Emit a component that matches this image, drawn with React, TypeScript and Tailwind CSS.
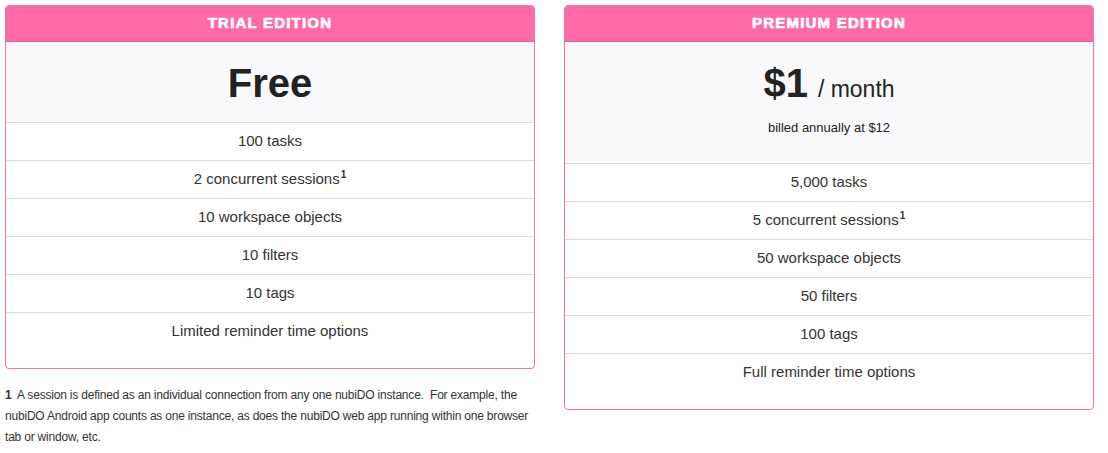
import React from "react";

const font = { fontFamily: '"Liberation Sans", Arial, sans-serif' };

function Sup() {
  return <sup className="text-[10px] font-bold relative -top-[6px] ml-px">1</sup>;
}

function Row({ children }: { children: React.ReactNode }) {
  return (
    <div className="h-[38px] border-t border-[#dddddd] flex items-center justify-center text-[15px] text-[#333333]">
      <span>{children}</span>
    </div>
  );
}

function Card({
  title,
  price,
  priceHeight,
  rows,
}: {
  title: string;
  price: React.ReactNode;
  priceHeight: string;
  rows: React.ReactNode[];
}) {
  return (
    <div className="w-[530px] border border-[#e27aa5] rounded-[4px] overflow-hidden bg-white pb-[18px]">
      <div className="h-[36px] bg-[#ff6aa6] border-b border-[#e0609a] flex items-center justify-center">
        <span className="text-white text-[15px] font-bold tracking-[1.2px] uppercase [-webkit-text-stroke:0.7px_white]">
          {title}
        </span>
      </div>
      <div className={`${priceHeight} bg-[#f9f9fb]`}>{price}</div>
      {rows.map((r, i) => (
        <Row key={i}>{r}</Row>
      ))}
    </div>
  );
}

export default function App() {
  return (
    <div className="bg-white w-[1108px] h-[453px] pt-[5px] pl-[5px]" style={font}>
      <div className="flex gap-[29px] items-start">
        <div className="w-[530px]">
          <Card
            title="Trial Edition"
            priceHeight="h-[80px]"
            price={
              <div className="h-full flex items-center justify-center pt-[1px]">
                <span className="text-[40px] font-bold text-[#222222] leading-none">Free</span>
              </div>
            }
            rows={[
              "100 tasks",
              <>2 concurrent sessions<Sup /></>,
              "10 workspace objects",
              "10 filters",
              "10 tags",
              "Limited reminder time options",
            ]}
          />
          <p className="mt-[16px] w-[532px] text-[12px] leading-[21px] tracking-[-0.2px] text-[#333333] whitespace-pre-wrap">
            <b>1</b>{"  A session is defined as an individual connection from any one nubiDO instance.  For example, the nubiDO Android app counts as one instance, as does the nubiDO web app running within one browser tab or window, etc."}
          </p>
        </div>
        <Card
          title="Premium Edition"
          priceHeight="h-[121px]"
          price={
            <div className="flex flex-col items-center pt-[21px]">
              <div className="flex items-baseline text-[#222222] leading-none">
                <span className="text-[40px] font-bold">$1</span>
                <span className="text-[23px] ml-[10px]">/ month</span>
              </div>
              <div className="mt-[15px] text-[13px] text-[#222222]">billed annually at $12</div>
            </div>
          }
          rows={[
            "5,000 tasks",
            <>5 concurrent sessions<Sup /></>,
            "50 workspace objects",
            "50 filters",
            "100 tags",
            "Full reminder time options",
          ]}
        />
      </div>
    </div>
  );
}
